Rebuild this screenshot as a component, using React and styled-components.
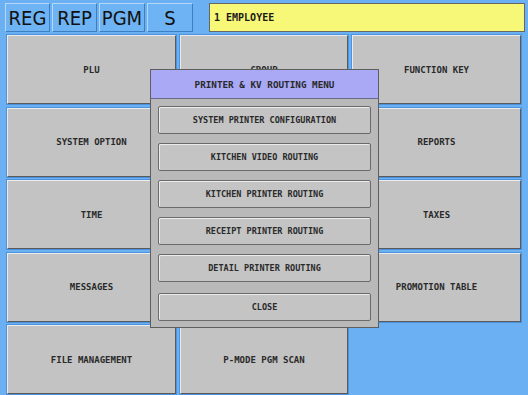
import React from 'react';
import styled, { createGlobalStyle } from 'styled-components';

const GlobalStyle = createGlobalStyle`
    html, body {
        margin: 0;
        padding: 0;
    }
    body {
        background: #6bb0f2;
        font-family: "DejaVu Sans Mono", monospace;
    }
`;

const Screen = styled.div`
    position: relative;
    width: 528px;
    height: 395px;
    background: #6bb0f2;
    overflow: hidden;
    box-sizing: border-box;
    padding: 3px 3px 0 5px;
`;

const TopBar = styled.div`
    display: flex;
    align-items: stretch;
    height: 29px;
`;

const Tab = styled.div`
    width: ${props => props.wide ? 46 : 45}px;
    margin-right: 2px;
    box-sizing: border-box;
    display: flex;
    align-items: center;
    justify-content: center;
    font-family: "DejaVu Sans Condensed", "DejaVu Sans", sans-serif;
    font-size: 20px;
    color: #111;
    background: #6eb3f3;
    border-top: 1px solid #b6d8f8;
    border-left: 1px solid #b6d8f8;
    border-bottom: 1px solid #3d7fc0;
    border-right: 1px solid #3d7fc0;
    padding-top: 1px;
`;

const Status = styled.div`
    flex: 1;
    margin-left: 14px;
    box-sizing: border-box;
    background: #f8f878;
    border: 1px solid #666;
    display: flex;
    align-items: center;
    padding-left: 4px;
    font-size: 10px;
    font-weight: bold;
    color: #1a1a1a;
`;

const Grid = styled.div`
    display: grid;
    grid-template-columns: 169px 168px 169px;
    grid-template-rows: repeat(5, 69px);
    column-gap: 4px;
    row-gap: 3.5px;
    margin-top: 3px;
    margin-left: 2px;
`;

const GridButton = styled.div`
    box-sizing: border-box;
    background: #c3c3c3;
    border-top: 1px solid #ececec;
    border-left: 1px solid #ececec;
    border-bottom: 1px solid #5a5a5a;
    border-right: 1px solid #5a5a5a;
    box-shadow: 0 0 0 1px #4d93dc;
    display: flex;
    align-items: center;
    justify-content: center;
    font-size: 9px;
    font-weight: bold;
    color: #2a2a2a;
`;

const Empty = styled.div``;

const Dialog = styled.div`
    position: absolute;
    left: 150px;
    top: 69px;
    width: 229px;
    height: 259px;
    box-sizing: border-box;
    background: #b9b9b9;
    border: 1px solid #5e5e5e;
    display: flex;
    flex-direction: column;
`;

const DialogHeader = styled.div`
    height: 28px;
    background: #a9a9f6;
    border-bottom: 1px solid #6a6a8a;
    display: flex;
    align-items: center;
    justify-content: center;
    font-size: 9.3px;
    font-weight: bold;
    color: #2a2a2a;
`;

const DialogBody = styled.div`
    display: flex;
    flex-direction: column;
    gap: 9px;
    padding: 7px 7px 0 7px;
`;

const MenuButton = styled.div`
    height: 28px;
    box-sizing: border-box;
    background: #c4c4c4;
    border: 1px solid #6a6a6a;
    border-radius: 2px;
    box-shadow: inset 1px 1px 0 #ececec;
    display: flex;
    align-items: center;
    justify-content: center;
    font-size: 8.5px;
    font-weight: bold;
    color: #2a2a2a;
    margin-top: ${props => props.spaced ? 2 : 0}px;
`;

const tabs = ['REG', 'REP', 'PGM', 'S'];

const gridItems = [
    'PLU', 'GROUP', 'FUNCTION KEY',
    'SYSTEM OPTION', '', 'REPORTS',
    'TIME', '', 'TAXES',
    'MESSAGES', '', 'PROMOTION TABLE',
    'FILE MANAGEMENT', 'P-MODE PGM SCAN', null,
];

const menuItems = [
    'SYSTEM PRINTER CONFIGURATION',
    'KITCHEN VIDEO ROUTING',
    'KITCHEN PRINTER ROUTING',
    'RECEIPT PRINTER ROUTING',
    'DETAIL PRINTER ROUTING',
];

const App = () => (
    <Screen>
        <GlobalStyle />
        <TopBar>
            {tabs.map((t, i) => (
                <Tab key={t} wide={i > 1}>{t}</Tab>
            ))}
            <Status>1 EMPLOYEE</Status>
        </TopBar>
        <Grid>
            {gridItems.map((label, i) =>
                label === null
                    ? <Empty key={i} />
                    : <GridButton key={i}>{label}</GridButton>
            )}
        </Grid>
        <Dialog>
            <DialogHeader>PRINTER &amp; KV ROUTING MENU</DialogHeader>
            <DialogBody>
                {menuItems.map(m => <MenuButton key={m}>{m}</MenuButton>)}
                <MenuButton spaced>CLOSE</MenuButton>
            </DialogBody>
        </Dialog>
    </Screen>
);

export default App;
